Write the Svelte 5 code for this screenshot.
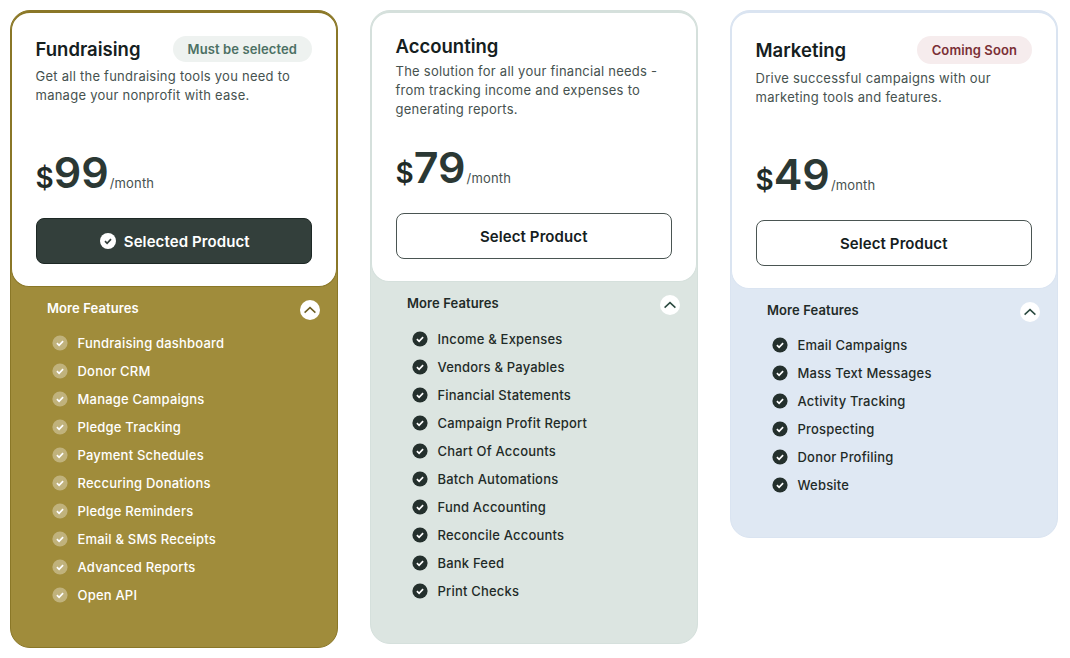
<script>
    const plans = [
        {
            key: "fundraising",
            name: "Fundraising",
            badge: "Must be selected",
            desc: "Get all the fundraising tools you need to manage your nonprofit with ease.",
            price: 99,
            selected: true,
            features: ["Fundraising dashboard", "Donor CRM", "Manage Campaigns", "Pledge Tracking", "Payment Schedules", "Reccuring Donations", "Pledge Reminders", "Email & SMS Receipts", "Advanced Reports", "Open API"]
        },
        {
            key: "accounting",
            name: "Accounting",
            desc: "The solution for all your financial needs - from tracking income and expenses to generating reports.",
            price: 79,
            features: ["Income & Expenses", "Vendors & Payables", "Financial Statements", "Campaign Profit Report", "Chart Of Accounts", "Batch Automations", "Fund Accounting", "Reconcile Accounts", "Bank Feed", "Print Checks"]
        },
        {
            key: "marketing",
            name: "Marketing",
            badge: "Coming Soon",
            desc: "Drive successful campaigns with our marketing tools and features.",
            price: 49,
            features: ["Email Campaigns", "Mass Text Messages", "Activity Tracking", "Prospecting", "Donor Profiling", "Website"]
        }
    ];
</script>

<div class="plans">
    {#each plans as plan}
        <section class="plan {plan.key}">
            <div class="plan-main">
                <div class="plan-head">
                    <h2>{plan.name}</h2>
                    {#if plan.badge}
                        <span class="badge">{plan.badge}</span>
                    {/if}
                </div>
                <p class="desc">{plan.desc}</p>
                <div class="price">
                    <span class="currency">$</span><span class="amount">{plan.price}</span><span class="period">/month</span>
                </div>
                <button class="select" class:selected={plan.selected}>
                    {#if plan.selected}
                        <svg viewBox="0 0 16 16" width="16" height="16" aria-hidden="true">
                            <circle cx="8" cy="8" r="8" fill="#fff" />
                            <path d="M5 8.2l2.1 2.1L11 6.2" fill="none" stroke="#333f3b" stroke-width="1.7" />
                        </svg>
                        Selected Product
                    {:else}
                        Select Product
                    {/if}
                </button>
            </div>
            <div class="more">
                <div class="more-head">
                    <span>More Features</span>
                    <span class="toggle">
                        <svg viewBox="0 0 20 20" width="20" height="20" aria-hidden="true">
                            <path d="M4.6 12.6L10 7.6l5.4 5" fill="none" stroke="currentColor" stroke-width="1.5" />
                        </svg>
                    </span>
                </div>
                <ul>
                    {#each plan.features as feature}
                        <li>
                            <svg class="tick" viewBox="0 0 16 16" width="16" height="16" aria-hidden="true">
                                <circle class="tick-bg" cx="8" cy="8" r="7.6" />
                                <path class="tick-mark" d="M4.9 8.2l2.2 2.1 4-4.1" fill="none" stroke-width="1.7" />
                            </svg>
                            {feature}
                        </li>
                    {/each}
                </ul>
            </div>
        </section>
    {/each}
</div>

<style>
    :global(body) {
        margin: 0;
        background: #fff;
        font-family: "Inter", "Liberation Sans", sans-serif;
        color: #1f2b28;
    }

    .plans {
        padding: 10px 0 0 9.5px;
        display: flex;
        align-items: flex-start;
        gap: 31.5px;
    }

    .plan {
        --edge: #8a7727;
        width: 328.5px;
        box-sizing: border-box;
        border: 1px solid var(--edge);
        border-radius: 20px;
    }

    .fundraising {
        background: #a08c3b;
        color: #fff;
    }

    .accounting {
        --edge: #d5e0dc;
        background: #dce5e1;
    }

    .marketing {
        --edge: #dae4f1;
        background: #dfe8f3;
    }

    .plan-main {
        padding: 23px 24px 22px;
        background: #fff;
        border: solid var(--edge);
        border-width: 2px 1.5px 1px;
        border-radius: 19px 19px 18px 18px;
        color: #1f2b28;
    }

    .plan-head {
        display: flex;
        align-items: center;
        justify-content: space-between;
        min-height: 21px;
    }

    h2 {
        margin: 0;
        font-size: 18.5px;
        line-height: 21px;
        font-weight: 600;
        color: #15201e;
    }

    .badge {
        padding: 0 15px;
        height: 26px;
        display: flex;
        align-items: center;
        border-radius: 13px;
        background: #eef2f0;
        color: #4c7064;
        font-size: 13px;
        font-weight: 600;
        letter-spacing: 0.1px;
    }

    .marketing .badge {
        height: 28px;
        border-radius: 14px;
        background: #f6eced;
        color: #7a2f35;
    }

    .desc {
        margin: 5px 0 0;
        min-height: 57px;
        font-size: 13px;
        line-height: 19px;
        letter-spacing: 0.25px;
        color: #46524f;
    }

    .price {
        margin-top: 25px;
        height: 46px;
        display: flex;
        align-items: baseline;
    }

    .currency {
        font-size: 28px;
        font-weight: 600;
    }

    .amount {
        font-size: 43px;
        font-weight: 600;
        line-height: 46px;
        color: #2b3834;
    }

    .period {
        margin-left: 1px;
        font-size: 13px;
        letter-spacing: 0.15px;
        color: #46524f;
    }

    .select {
        margin-top: 23px;
        width: 100%;
        height: 46px;
        display: flex;
        align-items: center;
        justify-content: center;
        gap: 8px;
        border: 1px solid #4a5552;
        border-radius: 8px;
        background: #fff;
        color: #15201e;
        font: 600 15px "Inter", "Liberation Sans", sans-serif;
        letter-spacing: 0.1px;
    }

    .select.selected {
        padding-left: 8px;
        background: #333f3b;
        border-color: #1d2825;
        color: #fff;
    }

    .more {
        padding: 11px 17.5px 37.5px 36.5px;
        font-size: 13px;
        font-weight: 500;
        letter-spacing: 0.2px;
    }

    .more-head {
        display: flex;
        align-items: center;
        justify-content: space-between;
        height: 20px;
        font-weight: 600;
        font-size: 13px;
        letter-spacing: 0.1px;
    }

    .toggle {
        margin-top: 3px;
        width: 20px;
        height: 20px;
        border-radius: 50%;
        background: #fff;
        color: #2b4a40;
        display: block;
    }

    .toggle svg {
        display: block;
    }

    .fundraising .toggle {
        color: #6d5e22;
    }

    ul {
        margin: 11px 0 0;
        padding: 0;
        list-style: none;
    }

    .accounting ul {
        margin-top: 12px;
    }

    li {
        height: 28px;
        padding-left: 5px;
        display: flex;
        align-items: center;
        gap: 9.5px;
    }

    .tick-bg {
        fill: #24302d;
    }

    .tick-mark {
        stroke: #fff;
    }

    .fundraising .tick-bg {
        fill: #c0b27c;
    }
</style>
